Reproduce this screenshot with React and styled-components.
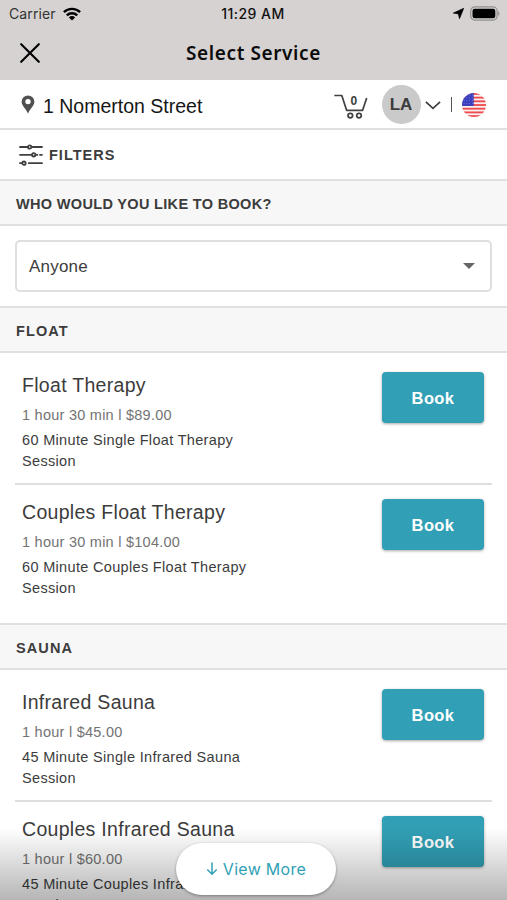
import styled, { createGlobalStyle } from 'styled-components'

const sections = [
  {
    name: 'Float',
    services: [
      { id: 1, title: 'Float Therapy', time: '1 hour 30 min', price: '$89.00', desc: '60 Minute Single Float Therapy Session' },
      { id: 2, title: 'Couples Float Therapy', time: '1 hour 30 min', price: '$104.00', desc: '60 Minute Couples Float Therapy Session' },
    ],
  },
  {
    name: 'Sauna',
    services: [
      { id: 3, title: 'Infrared Sauna', time: '1 hour', price: '$45.00', desc: '45 Minute Single Infrared Sauna Session' },
      { id: 4, title: 'Couples Infrared Sauna', time: '1 hour', price: '$60.00', desc: '45 Minute Couples Infrared Sauna Session' },
    ],
  },
]

//-------------------------Icons-----------------------
const WifiIcon = () => (
  <svg width='18' height='14' viewBox='0 0 18 14' fill='none' stroke='#000' strokeWidth='2.4'>
    <path d='M0.9 5.2a11.6 11.6 0 0 1 16.2 0' />
    <path d='M3.8 8.3a7.5 7.5 0 0 1 10.4 0' />
    <path d='M9 13.6L5.9 10.4a4.4 4.4 0 0 1 6.2 0z' fill='#000' stroke='none' />
  </svg>
)

const ArrowIcon = () => (
  <svg width='11' height='11' viewBox='0 0 11 11'>
    <path d='M10.8 0.2L6.5 10.8L5.3 5.9L0.2 5.1z' fill='#000' stroke='#000' strokeWidth='0.6' />
  </svg>
)

const BatteryIcon = () => (
  <svg width='30' height='15' viewBox='0 0 30 15'>
    <rect x='0.7' y='0.9' width='26.4' height='13.2' rx='4' fill='none' stroke='#918e8e' strokeWidth='1.2' />
    <rect x='2.5' y='2.8' width='22.8' height='9.4' rx='2.3' fill='#000' />
    <path d='M28.2 5.2c1.7.7 1.7 3.9 0 4.6z' fill='#918e8e' />
  </svg>
)

const CloseIcon = () => (
  <svg width='20' height='20' viewBox='0 0 20 20' stroke='#000' strokeWidth='2.1' strokeLinecap='round'>
    <path d='M1.2 1.2L18.8 18.8M18.8 1.2L1.2 18.8' />
  </svg>
)

const PinIcon = () => (
  <svg width='14' height='19' viewBox='0 0 14 19'>
    <path
      d='M7 0.4a6.4 6.4 0 0 0-6.4 6.4c0 3.9 4.6 7.3 6.4 11.8c1.8-4.5 6.4-7.9 6.4-11.8A6.4 6.4 0 0 0 7 0.4zM7 3.9a2.7 2.7 0 1 1 0 5.4a2.7 2.7 0 0 1 0-5.4z'
      fill='#505050'
      fillRule='evenodd'
    />
  </svg>
)

const CartIcon = () => (
  <svg width='34' height='26' viewBox='0 0 34 26' fill='none' stroke='#404040' strokeWidth='1.7'>
    <path d='M0.3 2.5h7.5l4.8 14.8h16L32.7 4.9' strokeLinejoin='round' />
    <circle cx='16.3' cy='22.6' r='2.3' />
    <circle cx='25' cy='22.6' r='2.3' />
  </svg>
)

const ChevronIcon = () => (
  <svg width='16' height='10' viewBox='0 0 16 10' fill='none' stroke='#404040' strokeWidth='1.7'>
    <path d='M0.9 1.8L8 8.3L15.1 1.8' />
  </svg>
)

const FlagIcon = () => (
  <svg width='24' height='24' viewBox='0 0 23 23'>
    <clipPath id='flag'>
      <circle cx='11.5' cy='11.5' r='11.5' />
    </clipPath>
    <g clipPath='url(#flag)'>
      <rect width='23' height='23' fill='#f8efef' />
      {[0, 1, 2, 3, 4, 5, 6].map((i) => (
        <rect key={i} y={i * 3.54} width='23' height='1.77' fill='#f04c50' />
      ))}
      <rect width='11.2' height='12.4' fill='#3a3fc0' />
      {[2, 4.7, 7.4, 10.1].map((y) =>
        [2, 4.7, 7.4, 10].map((x) => <circle key={`${x}-${y}`} cx={x} cy={y} r='0.45' fill='#9ea1e6' />)
      )}
    </g>
  </svg>
)

const FiltersIcon = () => (
  <svg width='24' height='22' viewBox='0 0 24 22' fill='none' stroke='#404040' strokeWidth='1.8' strokeLinecap='round'>
    <path d='M1 3h7.4M13 3h10M1 10.8h11.3M17 10.8h1.4M21 10.8h2M1 19.2h1.6M9.8 19.2H23' />
    <circle cx='10.7' cy='3' r='1.7' />
    <circle cx='14.7' cy='10.8' r='1.7' />
    <circle cx='5' cy='19.2' r='1.7' />
  </svg>
)

const DownIcon = () => (
  <svg width='12' height='14' viewBox='0 0 12 14' fill='none' stroke='#319fb5' strokeWidth='1.5'>
    <path d='M6 0.6v11.6M1.3 7.4L6 12.2l4.7-4.8' />
  </svg>
)

const App = () => {
  return <Wrapper>
    <GlobalStyle />
    <StatusBar>
      <Carrier>Carrier <WifiIcon /></Carrier>
      <Clock>11:29 AM</Clock>
      <StatusIcons><ArrowIcon /><BatteryIcon /></StatusIcons>
    </StatusBar>
    <Header>
      <CloseIcon />
      <h1>Select Service</h1>
    </Header>
    <LocationBar>
      <PinIcon />
      <Address>1 Nomerton Street</Address>
      <Cart>
        <CartIcon />
        <CartCount>0</CartCount>
      </Cart>
      <Avatar>LA</Avatar>
      <ChevronIcon />
      <Separator />
      <FlagIcon />
    </LocationBar>
    <Filters>
      <FiltersIcon />
      <span>Filters</span>
    </Filters>
    <SectionTitle $spacing='0.33px'>Who would you like to book?</SectionTitle>
    <SelectArea>
      <Select>
        <span>Anyone</span>
        <Caret />
      </Select>
    </SelectArea>
    {sections.map(({ name, services }) => (
      <section key={name}>
        <SectionTitle>{name}</SectionTitle>
        <ServiceList>
          {services.map(({ id, title, time, price, desc }) => (
            <Service key={id}>
              <div className='info'>
                <h3>{title}</h3>
                <p className='meta'>{time} l {price}</p>
                <p className='desc'>{desc}</p>
              </div>
              <BookButton>Book</BookButton>
            </Service>
          ))}
        </ServiceList>
      </section>
    ))}
    <Fade>
      <ViewMore><DownIcon /> View More</ViewMore>
    </Fade>
  </Wrapper>
}

const GlobalStyle = createGlobalStyle`
  * {
    box-sizing: border-box;
    margin: 0;
    padding: 0;
  }
  body {
    background: #fff;
    overflow: hidden;
  }
  svg {
    display: block;
    flex-shrink: 0;
  }
`

const Wrapper = styled.main`
  position: relative;
  width: 507px;
  height: 900px;
  overflow: hidden;
  background: #fff;
  color: #3c3c3c;
  font-family: 'Liberation Sans', Arial, sans-serif;
`

const StatusBar = styled.div`
  display: grid;
  grid-template-columns: 1fr auto 1fr;
  align-items: center;
  height: 27px;
  padding: 0 7px 0 9px;
  background: #d6d2d1;
  color: #111;
  font-family: Inter, sans-serif;
  font-size: 14px;
`

const Carrier = styled.div`
  display: flex;
  align-items: center;
  gap: 7px;
  color: #333;
  letter-spacing: 0.1px;
`

const Clock = styled.div`
  margin-right: 3px;
  font-weight: 500;
  font-size: 14px;
  letter-spacing: 0.45px;
`

const StatusIcons = styled.div`
  display: flex;
  align-items: center;
  justify-content: flex-end;
  gap: 6px;
`

const Header = styled.header`
  display: grid;
  grid-template-columns: 20px 1fr 20px;
  align-items: center;
  height: 53px;
  padding: 0 20px 2px;
  background: #d6d2d1;
  h1 {
    color: #0c0c0c;
    font-family: 'Noto Sans', sans-serif;
    font-size: 19px;
    font-weight: 600;
    letter-spacing: 0.6px;
    line-height: 24px;
    text-align: center;
  }
`

const LocationBar = styled.div`
  display: flex;
  align-items: center;
  height: 50px;
  padding: 1px 21px 0 21px;
  border-bottom: 2px solid #e0e0e0;
`

const Address = styled.span`
  flex: 1;
  margin-left: 8px;
  color: #161616;
  font-size: 19.5px;
  line-height: 24px;
  padding-top: 2px;
`

const Cart = styled.div`
  position: relative;
  margin: 3px 14px 0 0;
`

const CartCount = styled.span`
  position: absolute;
  top: 1px;
  left: 17px;
  font-size: 12px;
  font-weight: 700;
  line-height: 15px;
`

const Avatar = styled.div`
  display: flex;
  align-items: center;
  justify-content: center;
  width: 39px;
  height: 39px;
  margin-right: 4px;
  border-radius: 50%;
  background: #cacaca;
  font-size: 17px;
  font-weight: 700;
`

const Separator = styled.div`
  width: 1.5px;
  height: 15px;
  margin: 0 10px;
  background: #555;
`

const Filters = styled.div`
  display: flex;
  align-items: center;
  gap: 6px;
  height: 49px;
  padding: 1px 19px 0;
  font-size: 14.5px;
  font-weight: 700;
  letter-spacing: 1px;
  text-transform: uppercase;
`

const SectionTitle = styled.h2`
  height: 47px;
  padding-left: 16px;
  border-top: 2px solid #e0e0e0;
  border-bottom: 2px solid #e0e0e0;
  background: #f7f7f7;
  font-size: 14.5px;
  font-weight: 700;
  letter-spacing: ${({ $spacing }) => $spacing || '1.1px'};
  line-height: 47px;
  text-transform: uppercase;
`

const SelectArea = styled.div`
  height: 80px;
  padding: 14px 15px 0;
`

const Select = styled.div`
  display: flex;
  align-items: center;
  justify-content: space-between;
  height: 52px;
  padding: 1px 15px 0 12px;
  border: 2px solid #dfdfdf;
  border-radius: 5px;
  font-size: 17px;
  letter-spacing: 0.2px;
`

const Caret = styled.i`
  margin-bottom: 1px;
  border: 6px solid transparent;
  border-top-color: #666;
  border-bottom: 0;
`

const ServiceList = styled.div`
  padding: 5px 15px 11px;
`

const Service = styled.article`
  display: flex;
  justify-content: space-between;
  height: 127px;
  padding: 14px 8px 0 7px;
  border-bottom: 2px solid #dedede;
  &:last-child {
    border-bottom: 0;
  }
  .info {
    width: 250px;
  }
  h3 {
    font-size: 19.5px;
    font-weight: 400;
    letter-spacing: 0.3px;
    line-height: 26px;
  }
  .meta {
    margin-top: 5px;
    color: #737373;
    font-size: 14.5px;
    letter-spacing: 0.25px;
    line-height: 24px;
  }
  .desc {
    margin-top: 3px;
    font-size: 14.5px;
    letter-spacing: 0.33px;
    line-height: 21px;
  }
`

const BookButton = styled.button`
  width: 102px;
  height: 51px;
  padding-top: 1px;
  border: 0;
  border-radius: 4px;
  background: #319fb5;
  box-shadow: 0 1px 3px rgba(0, 0, 0, 0.35);
  color: #fff;
  font-family: inherit;
  font-size: 16.5px;
  font-weight: 700;
  letter-spacing: 0.4px;
`

// sits over the end of the list
const Fade = styled.div`
  position: absolute;
  right: 0;
  bottom: 0;
  left: 0;
  display: flex;
  justify-content: center;
  height: 72px;
  padding: 15px 0 0 5px;
  background: linear-gradient(rgba(0, 0, 0, 0), rgba(0, 0, 0, 0.29));
`

const ViewMore = styled.button`
  display: flex;
  align-items: center;
  justify-content: center;
  gap: 5px;
  width: 160px;
  height: 52px;
  border: 0;
  border-radius: 26px;
  background: #fff;
  box-shadow: 0 1px 3px rgba(0, 0, 0, 0.35);
  color: #319fb5;
  font-family: Inter, sans-serif;
  font-size: 16px;
  letter-spacing: 0.3px;
`

export default App
